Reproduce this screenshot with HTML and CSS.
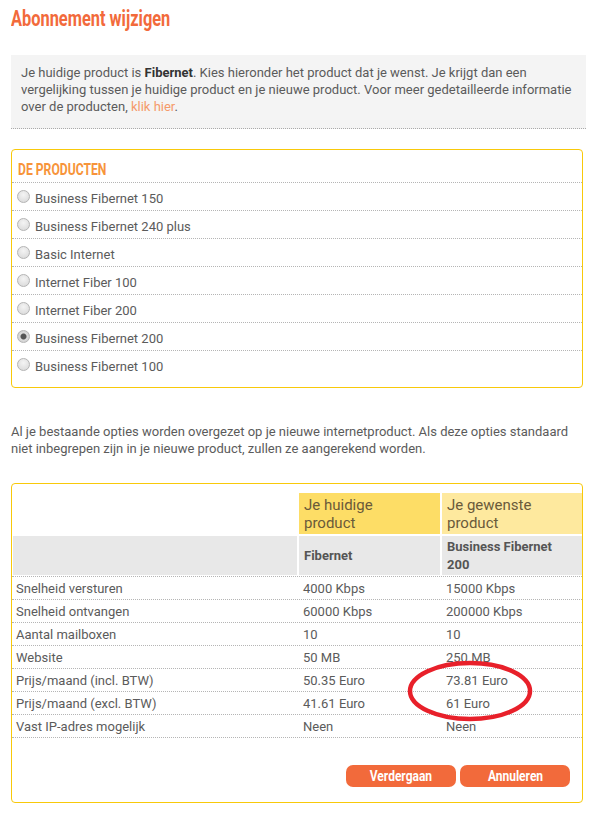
FILE: index.html
```html
<!DOCTYPE html>
<html lang="nl">
<head>
<meta charset="utf-8">
<title>Abonnement wijzigen</title>
<link rel="stylesheet" href="styles.css">
</head>
<body>
<div class="page">
  <h1 class="title"><span class="cond">Abonnement wijzigen</span></h1>

  <div class="info">
    <p>Je huidige product is <b>Fibernet</b>. Kies hieronder het product dat je wenst. Je krijgt dan een vergelijking tussen je huidige product en je nieuwe product. Voor meer gedetailleerde informatie over de producten, <a href="#" class="link">klik hier</a>.</p>
  </div>

  <div class="box products">
    <h2 class="box-title"><span class="cond">DE PRODUCTEN</span></h2>
    <label class="prod"><input type="radio" name="p" class="radio"> Business Fibernet 150</label>
    <label class="prod"><input type="radio" name="p" class="radio"> Business Fibernet 240 plus</label>
    <label class="prod"><input type="radio" name="p" class="radio"> Basic Internet</label>
    <label class="prod"><input type="radio" name="p" class="radio"> Internet Fiber 100</label>
    <label class="prod"><input type="radio" name="p" class="radio"> Internet Fiber 200</label>
    <label class="prod"><input type="radio" name="p" class="radio" checked> Business Fibernet 200</label>
    <label class="prod last"><input type="radio" name="p" class="radio"> Business Fibernet 100</label>
  </div>

  <p class="note">Al je bestaande opties worden overgezet op je nieuwe internetproduct. Als deze opties standaard niet inbegrepen zijn in je nieuwe product, zullen ze aangerekend worden.</p>

  <div class="box compare">
    <div class="grid head">
      <div class="cell blank"></div>
      <div class="cell cur">Je huidige product</div>
      <div class="cell want">Je gewenste product</div>
      <div class="cell gray"></div>
      <div class="cell gray name">Fibernet</div>
      <div class="cell gray name">Business Fibernet 200</div>
    </div>
    <div class="grid row"><div class="c1">Snelheid versturen</div><div class="c2">4000 Kbps</div><div class="c3">15000 Kbps</div></div>
    <div class="grid row"><div class="c1">Snelheid ontvangen</div><div class="c2">60000 Kbps</div><div class="c3">200000 Kbps</div></div>
    <div class="grid row"><div class="c1">Aantal mailboxen</div><div class="c2">10</div><div class="c3">10</div></div>
    <div class="grid row"><div class="c1">Website</div><div class="c2">50 MB</div><div class="c3">250 MB</div></div>
    <div class="grid row"><div class="c1">Prijs/maand (incl. BTW)</div><div class="c2">50.35 Euro</div><div class="c3">73.81 Euro</div></div>
    <div class="grid row"><div class="c1">Prijs/maand (excl. BTW)</div><div class="c2">41.61 Euro</div><div class="c3">61 Euro</div></div>
    <div class="grid row"><div class="c1">Vast IP-adres mogelijk</div><div class="c2">Neen</div><div class="c3">Neen</div></div>
    <div class="actions">
      <button class="btn"><span class="cond">Verdergaan</span></button>
      <button class="btn"><span class="cond">Annuleren</span></button>
    </div>
    <svg class="circle" width="132" height="66" viewBox="0 0 132 66" aria-hidden="true">
      <ellipse cx="66" cy="33" rx="60" ry="28" fill="none" stroke="#e8202a" stroke-width="4.5"/>
    </svg>
  </div>
</div>
</body>
</html>
```
FILE: styles.css
```css
* { box-sizing: border-box; }
body {
  margin: 0;
  background: #fff;
  font-family: Roboto, "Liberation Sans", sans-serif;
  font-size: 13px;
  color: #5b5b5b;
}
.page {
  padding: 6px 0 10px 11px;
  width: 592px;
}
.cond {
  display: inline-block;
  transform-origin: left center;
  white-space: nowrap;
}
.title {
  margin: 0;
  height: 26px;
  font-size: 22px;
  line-height: 26px;
  font-weight: 700;
  color: #f26a3b;
}
.title .cond { transform: scaleX(0.745); }
.info {
  margin-top: 23px;
  width: 575px;
  background: #f4f4f4;
  border-bottom: 1px dotted #aaa;
  padding: 9px 10px 13px 10px;
}
.info p {
  margin: 0;
  line-height: 17px;
}
.info b { color: #333; font-weight: 700; }
.link { color: #f59a6a; text-decoration: none; }
.box {
  width: 572px;
  border: 1px solid #f8c90a;
  border-radius: 4px;
  background: #fff;
}
.products {
  margin-top: 20px;
  padding-bottom: 8px;
}
.box-title {
  margin: 0;
  height: 33px;
  padding: 10px 0 0 6px;
  font-size: 16px;
  line-height: 19px;
  font-weight: 700;
  color: #f7943a;
  border-bottom: 1px dotted #b5b5b5;
}
.box-title .cond { transform: scaleX(0.76); }
.prod {
  display: flex;
  align-items: center;
  height: 28px;
  padding: 3px 0 0 5px;
  border-bottom: 1px dotted #b5b5b5;
  cursor: pointer;
}
.prod.last { border-bottom: none; }
.radio {
  appearance: none;
  -webkit-appearance: none;
  margin: -4px 5px 0 0;
  width: 13px;
  height: 13px;
  border-radius: 50%;
  border: 1px solid #b4b4b4;
  background: radial-gradient(circle at 50% 35%, #f4f4f4 0%, #d6d6d6 100%);
  flex: none;
}
.radio:checked {
  background: radial-gradient(circle, #555 0, #555 2.5px, #dcdcdc 3.5px, #c8c8c8 100%);
}
.note {
  margin: 35px 0 0 0;
  line-height: 17px;
  width: 575px;
}
.compare {
  margin-top: 26px;
  position: relative;
  padding: 9px 0 15px 1px;
}
.grid {
  display: grid;
  grid-template-columns: 284px 141px 140px;
  column-gap: 2px;
}
.head {
  row-gap: 2px;
  border-bottom: 1px dotted #b5b5b5;
  margin-left: -1px;
  padding-left: 1px;
  padding-bottom: 1px;
}
.cell { padding: 0 5px; }
.cur, .want {
  height: 41px;
  font-size: 15px;
  line-height: 18px;
  padding: 3px 14px 0 5px;
  color: #6a5a3a;
}
.cur { background: #fddd66; }
.want { background: #fee99e; }
.gray {
  background: #e8e8e8;
  height: 39px;
}
.name {
  display: flex;
  align-items: center;
  font-weight: 700;
  color: #555;
  line-height: 18px;
}
.row {
  height: 23px;
  align-items: center;
  border-bottom: 1px dotted #b5b5b5;
  margin-left: -1px;
}
.row .c1 { padding-left: 4px; }
.row .c2 { padding-left: 5px; }
.row .c3 { padding-left: 5px; }
.actions {
  display: flex;
  justify-content: flex-end;
  gap: 4px;
  margin-top: 27px;
  padding-right: 12px;
}
.btn {
  width: 110px;
  height: 22px;
  border: none;
  border-radius: 7px;
  background: #f26a3b;
  color: #fff;
  font-family: Roboto, "Liberation Sans", sans-serif;
  font-weight: 700;
  font-size: 15px;
  padding: 0;
  cursor: pointer;
}
.btn .cond { transform: scaleX(0.8); transform-origin: center; }
.circle {
  position: absolute;
  left: 392px;
  top: 174px;
}
```
